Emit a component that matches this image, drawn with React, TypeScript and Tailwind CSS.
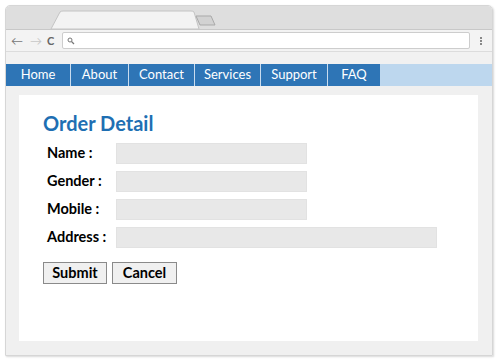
import React from "react";

const navItems = ["Home", "About", "Contact", "Services", "Support", "FAQ"];
const navWidths = [65, 58, 66, 66, 67, 52];

function Field({ label, wide }: { label: string; wide?: boolean }) {
  return (
    <div className="flex items-center h-[21px]">
      <div className="w-[73px] pl-[4px] text-[14.5px] font-bold text-black leading-none">{label}</div>
      <div className={`${wide ? "w-[321px]" : "w-[191px]"} h-[21px] bg-[#e8e8e8] border border-[#e2e2e2]`} />
    </div>
  );
}

export default function App() {
  return (
    <div className="w-[501px] h-[363px] bg-white pt-[5px] pl-[5px]" style={{ fontFamily: "Lato, 'Open Sans', sans-serif" }}>
      <div className="w-[488px] h-[351px] flex flex-col border border-[#d6d6d6] rounded-t-[5px] overflow-hidden shadow-[1px_1px_2px_rgba(0,0,0,0.15)]">
        {/* tab strip */}
        <div className="relative h-[23px] bg-[#dedede] shrink-0">
          <svg className="absolute left-0 top-0" width="488" height="23" viewBox="0 0 488 23">
            <path d="M45 23 L54 6 Q55 5 57 5 L185 5 Q187 5 188 6 L193 23 Z" fill="#f3f3f3" stroke="#c4c4c4" strokeWidth="1" />
            <path d="M190 10 L205 10 L209 19 L194 19 Z" fill="#d2d2d2" stroke="#a9a9a9" strokeWidth="1" strokeLinejoin="round" />
          </svg>
        </div>
        {/* address row */}
        <div className="h-[22px] bg-[#f3f3f3] flex items-center shrink-0 border-t border-[#c8c8c8]">
          <span className="w-[19px] ml-[5px] text-[12px] text-[#777] leading-none">←</span>
          <span className="w-[17px] text-[12px] text-[#c8c8c8] leading-none">→</span>
          <span className="w-[15px] text-[11px] font-bold text-[#666] leading-none">C</span>
          <div className="w-[408px] h-[17px] bg-white border border-[#cdcdcd] rounded-[2px] flex items-center pl-[4px]">
            <svg width="8" height="8" viewBox="0 0 8 8">
              <circle cx="3" cy="3" r="2" fill="none" stroke="#777" strokeWidth="1" />
              <path d="M4.5 4.5 L7 7" stroke="#777" strokeWidth="1.2" />
            </svg>
          </div>
          <div className="flex-1 flex justify-center">
            <div className="flex flex-col gap-[1px]">
              <div className="w-[2px] h-[2px] bg-[#888]" />
              <div className="w-[2px] h-[2px] bg-[#888]" />
              <div className="w-[2px] h-[2px] bg-[#888]" />
            </div>
          </div>
        </div>
        {/* bookmarks strip */}
        <div className="h-[13px] bg-[#f1f1f1] border-t border-[#dcdcdc] shrink-0" />
        {/* nav */}
        <div className="h-[22px] bg-[#bdd7ee] flex shrink-0">
          <div className="flex bg-[#2e75b6] h-full">
            {navItems.map((item, i) => (
              <div
                key={item}
                className={`h-full flex items-center justify-center text-white text-[13px] ${i < navItems.length - 1 ? "border-r border-[#c9dcef]" : ""}`}
                style={{ width: navWidths[i] }}
              >
                {item}
              </div>
            ))}
          </div>
        </div>
        {/* content */}
        <div className="flex-1 bg-[#f0f0f0] pt-[9px] pl-[13px] pr-[14px] pb-[14px] flex">
          <div className="flex-1 bg-white pl-[24px] pt-[18px]">
            <h1 className="text-[20px] font-bold text-[#1e6fb3] leading-none">Order Detail</h1>
            <div className="mt-[10px] flex flex-col gap-[7px]">
              <Field label="Name :" />
              <Field label="Gender :" />
              <Field label="Mobile :" />
              <Field label="Address :" wide />
            </div>
            <div className="mt-[14px] flex gap-[5px]">
              <button className="w-[64px] h-[22px] bg-[#f0f0f0] border border-[#8a8a8a] text-[14.5px] font-bold text-black leading-none">Submit</button>
              <button className="w-[65px] h-[22px] bg-[#f0f0f0] border border-[#8a8a8a] text-[14.5px] font-bold text-black leading-none">Cancel</button>
            </div>
          </div>
        </div>
      </div>
    </div>
  );
}
